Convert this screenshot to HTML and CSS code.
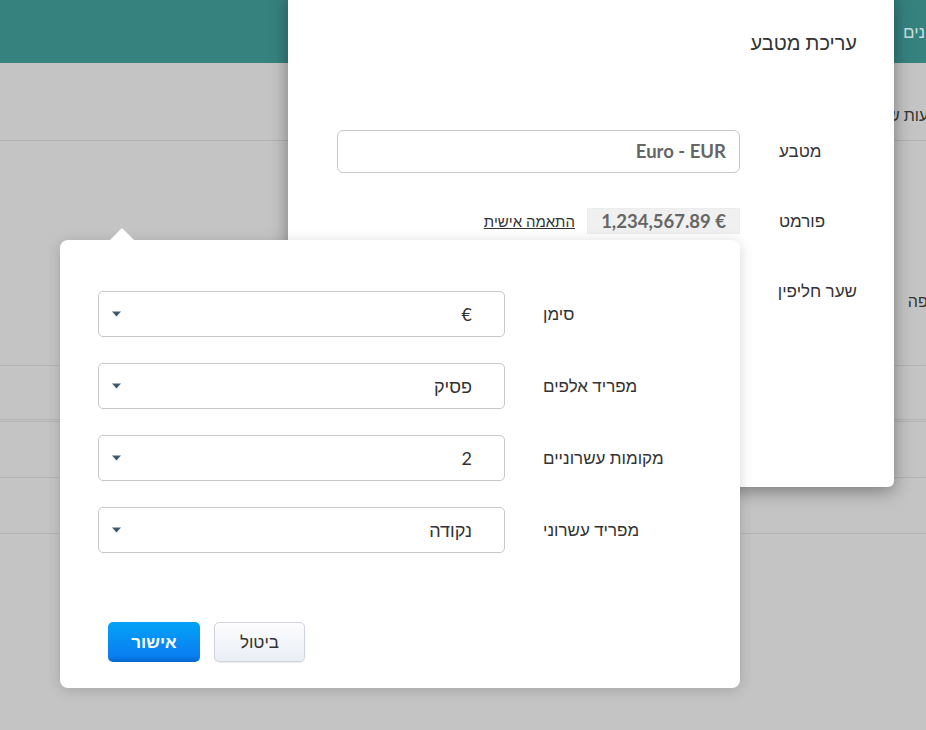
FILE: index.html
```html
<!DOCTYPE html>
<html lang="he" dir="rtl">
<head>
  <meta charset="UTF-8">
  <meta name="viewport" content="width=device-width, initial-scale=1.0">
  <title>עריכת מטבע</title>
  <link rel="stylesheet" href="styles.css">
</head>
<body>
  <div class="page">
    <div class="topbar">
      <span class="nav-item">נתונים</span>
    </div>
    <div class="list">
      <div class="list-row row-first"><span class="row-text">מטבעות שונים</span></div>
      <div class="list-row row-big"><span class="row-text row-text-mid">תקופה</span></div>
      <div class="list-row row-double"></div>
      <div class="list-row"></div>
      <div class="list-row"></div>
    </div>
  </div>

  <div class="modal">
    <div class="modal-title">עריכת מטבע</div>
    <div class="form">
      <div class="form-row">
        <div class="form-label">מטבע</div>
        <div class="form-field">
          <div class="text-input">Euro - EUR</div>
        </div>
      </div>
      <div class="form-row">
        <div class="form-label">פורמט</div>
        <div class="form-field format-field">
          <div class="format-preview"><span dir="ltr">1,234,567.89 €</span></div>
          <a class="format-link" href="#">התאמה אישית</a>
        </div>
      </div>
      <div class="form-row">
        <div class="form-label">שער חליפין</div>
        <div class="form-field">
          <div class="text-input">1</div>
        </div>
      </div>
    </div>
  </div>

  <div class="popover">
    <div class="popover-grid">
      <div class="pop-label">סימן</div>
      <div class="select">
        <span class="select-value">€</span>
        <svg class="select-arrow" width="9" height="6" viewBox="0 0 9 6"><path d="M0 0.5 L9 0.5 L4.5 5.5 Z" fill="#3f5a70"/></svg>
      </div>

      <div class="pop-label">מפריד אלפים</div>
      <div class="select">
        <span class="select-value">פסיק</span>
        <svg class="select-arrow" width="9" height="6" viewBox="0 0 9 6"><path d="M0 0.5 L9 0.5 L4.5 5.5 Z" fill="#3f5a70"/></svg>
      </div>

      <div class="pop-label">מקומות עשרוניים</div>
      <div class="select">
        <span class="select-value">2</span>
        <svg class="select-arrow" width="9" height="6" viewBox="0 0 9 6"><path d="M0 0.5 L9 0.5 L4.5 5.5 Z" fill="#3f5a70"/></svg>
      </div>

      <div class="pop-label">מפריד עשרוני</div>
      <div class="select">
        <span class="select-value">נקודה</span>
        <svg class="select-arrow" width="9" height="6" viewBox="0 0 9 6"><path d="M0 0.5 L9 0.5 L4.5 5.5 Z" fill="#3f5a70"/></svg>
      </div>
    </div>

    <div class="popover-actions">
      <button class="btn btn-cancel">ביטול</button>
      <button class="btn btn-ok">אישור</button>
    </div>
  </div>
</body>
</html>
```

FILE: styles.css
```css
* {
  margin: 0;
  padding: 0;
  box-sizing: border-box;
}

html, body {
  height: 100%;
}

body {
  font-family: Lato, 'Liberation Sans', Arial, sans-serif;
  background: #c4c4c4;
  color: #333;
  overflow: hidden;
  width: 926px;
  height: 730px;
}

.page {
  height: 100%;
}

.topbar {
  height: 63px;
  background: #36827f;
  display: flex;
  align-items: center;
}

.nav-item {
  color: #c9dedd;
  font-size: 17px;
  margin-right: -22px;
}

.list-row {
  height: 56px;
  border-bottom: 1px solid #b3b3b3;
  display: flex;
  align-items: flex-end;
}

.row-first {
  height: 78px;
  padding-bottom: 15px;
}

.row-big {
  height: 225px;
  align-items: flex-start;
  padding-top: 150px;
}

.row-double {
  border-bottom: 3px double #b3b3b3;
}

.row-text {
  font-size: 16px;
  color: #333;
  margin-right: -33px;
}

.row-text-mid {
  margin-right: -26px;
}

/* modal */
.modal {
  position: absolute;
  left: 288px;
  top: -10px;
  width: 606px;
  height: 497px;
  background: #fff;
  border-radius: 6px;
  box-shadow: 0 4px 18px rgba(0,0,0,0.38);
  padding: 40px 37px 0 49px;
}

.modal-title {
  font-size: 20px;
  line-height: 24px;
  color: #333;
}

.form {
  margin-top: 62px;
}

.form-row {
  display: grid;
  grid-template-columns: 78px 403px;
  column-gap: 39px;
  height: 70px;
  align-items: center;
}

.form-label {
  text-align: left;
  font-size: 17px;
  color: #333;
  white-space: nowrap;
}

.text-input {
  height: 43px;
  border: 1px solid #c8c8c8;
  border-radius: 6px;
  padding: 0 13px;
  display: flex;
  align-items: center;
  font-size: 18.5px;
  font-weight: bold;
  color: #666;
}

.format-field {
  display: flex;
  align-items: center;
  gap: 12px;
}

.format-preview {
  background: #f0f0f0;
  border: 1px solid #ececec;
  height: 26px;
  width: 153px;
  padding: 0 13px 0 0;
  display: flex;
  align-items: center;
  font-size: 18.5px;
  font-weight: bold;
  color: #666;
  white-space: nowrap;
}

.format-link {
  font-size: 15px;
  color: #333;
  text-decoration: underline;
}

/* popover de formato */
.popover {
  position: absolute;
  left: 60px;
  top: 240px;
  width: 680px;
  height: 448px;
  background: #fff;
  border-radius: 8px;
  box-shadow: 0 2px 14px rgba(0,0,0,0.16);
  padding: 51px 40px 0 38px;
}

.popover::before {
  content: '';
  position: absolute;
  left: 50px;
  top: -12px;
  border-left: 12px solid transparent;
  border-right: 12px solid transparent;
  border-bottom: 12px solid #fff;
}

.popover-grid {
  display: grid;
  grid-template-columns: 157px 407px;
  column-gap: 38px;
  row-gap: 26px;
  align-items: center;
}

.pop-label {
  text-align: left;
  font-size: 17px;
  color: #333;
}

.select {
  height: 46px;
  border: 1px solid #c8c8c8;
  border-radius: 5px;
  padding: 0 32px 0 13px;
  display: flex;
  align-items: center;
  justify-content: space-between;
  font-size: 18px;
  color: #333;
}

.select-arrow {
  display: block;
}

.popover-actions {
  display: flex;
  gap: 14px;
  margin-top: 69px;
  padding-left: 10px;
  justify-content: flex-end;
}

.btn {
  height: 40px;
  border-radius: 5px;
  font-family: Lato, 'Liberation Sans', Arial, sans-serif;
  font-size: 17px;
  cursor: pointer;
}

.btn-cancel {
  width: 91px;
  background: linear-gradient(to bottom, #fdfdfe 0%, #e9edf5 100%);
  border: 1px solid #cfd3dc;
  box-shadow: 0 1px 1px rgba(0,0,0,0.08);
  color: #333;
}

.btn-ok {
  width: 92px;
  background: linear-gradient(to bottom, #03a3f7 0%, #0a7ef0 85%, #0468d0 100%);
  border: none;
  color: #fff;
  font-weight: bold;
}
```
